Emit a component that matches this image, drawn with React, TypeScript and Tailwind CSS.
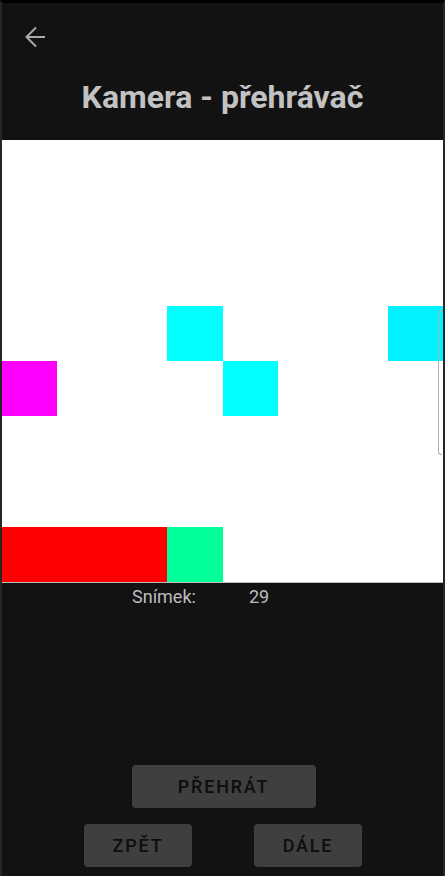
import React from "react";

// 8x8 frame, each entry = [row, col, colour]
const cells: [number, number, string][] = [
  [3, 3, "bg-[#00ffff]"],
  [3, 7, "bg-[#00f2ff]"],
  [4, 0, "bg-[#ff00ff]"],
  [4, 4, "bg-[#00ffff]"],
  [7, 0, "bg-[#ff0000]"],
  [7, 1, "bg-[#ff0000]"],
  [7, 2, "bg-[#ff0000]"],
  [7, 3, "bg-[#00ff99]"],
];

function colourAt(r: number, c: number) {
  const hit = cells.find(([rr, cc]) => rr === r && cc === c);
  return hit ? hit[2] : "bg-white";
}

export default function App() {
  return (
    <div
      className="flex h-[876px] w-[445px] flex-col border-x-2 border-t-[3px] border-x-[#262626] border-t-black bg-[#121212]"
      style={{ fontFamily: "Roboto, 'Noto Sans', sans-serif" }}
    >
      {/* Header */}
      <div className="h-[137px] shrink-0">
        <button className="ml-[22px] mt-[22px] flex size-6 items-center justify-center text-[#aaaaaa]" aria-label="Zpět">
          <svg width="24" height="24" viewBox="0 0 24 24" fill="none" stroke="currentColor" strokeWidth="2">
            <path d="M21 12H3M12 2.5 2.5 12l9.5 9.5" />
          </svg>
        </button>
        <h1 className="mt-[32px] text-center text-[32px] font-bold leading-none text-[#c2c2c2]">
          Kamera - přehrávač
        </h1>
      </div>

      {/* Frame */}
      <div className="relative shrink-0 border-b border-[#bdbdbd]">
        <div className="grid h-[442px] grid-cols-8 grid-rows-8">
          {Array.from({ length: 64 }, (_, i) => (
            <div key={i} className={colourAt(Math.floor(i / 8), i % 8)} />
          ))}
        </div>
        <div className="absolute right-[1px] top-[170px] h-[145px] w-[4px] rounded-l-[3px] border border-r-0 border-[#b0b0b0]" />
      </div>

      {/* Frame counter */}
      <div className="ml-[130px] flex text-[18px] text-[#bdbdbd]">
        <span className="w-[117px]">Snímek:</span>
        <span>29</span>
      </div>

      {/* Controls */}
      <div className="mt-auto mb-[9px] flex flex-col items-center gap-[16px]">
        <button className="ml-[2px] h-[43px] w-[184px] rounded-[4px] bg-[#3f3f3f] text-[18px] font-medium tracking-[0.1em] text-[#0d0d0d]">
          PŘEHRÁT
        </button>
        <div className="flex w-full justify-between pl-[82px] pr-[81px]">
          <button className="h-[43px] w-[108px] rounded-[4px] bg-[#3f3f3f] text-[18px] font-medium tracking-[0.1em] text-[#0d0d0d]">
            ZPĚT
          </button>
          <button className="h-[43px] w-[108px] rounded-[4px] bg-[#3f3f3f] text-[18px] font-medium tracking-[0.1em] text-[#0d0d0d]">
            DÁLE
          </button>
        </div>
      </div>
    </div>
  );
}
